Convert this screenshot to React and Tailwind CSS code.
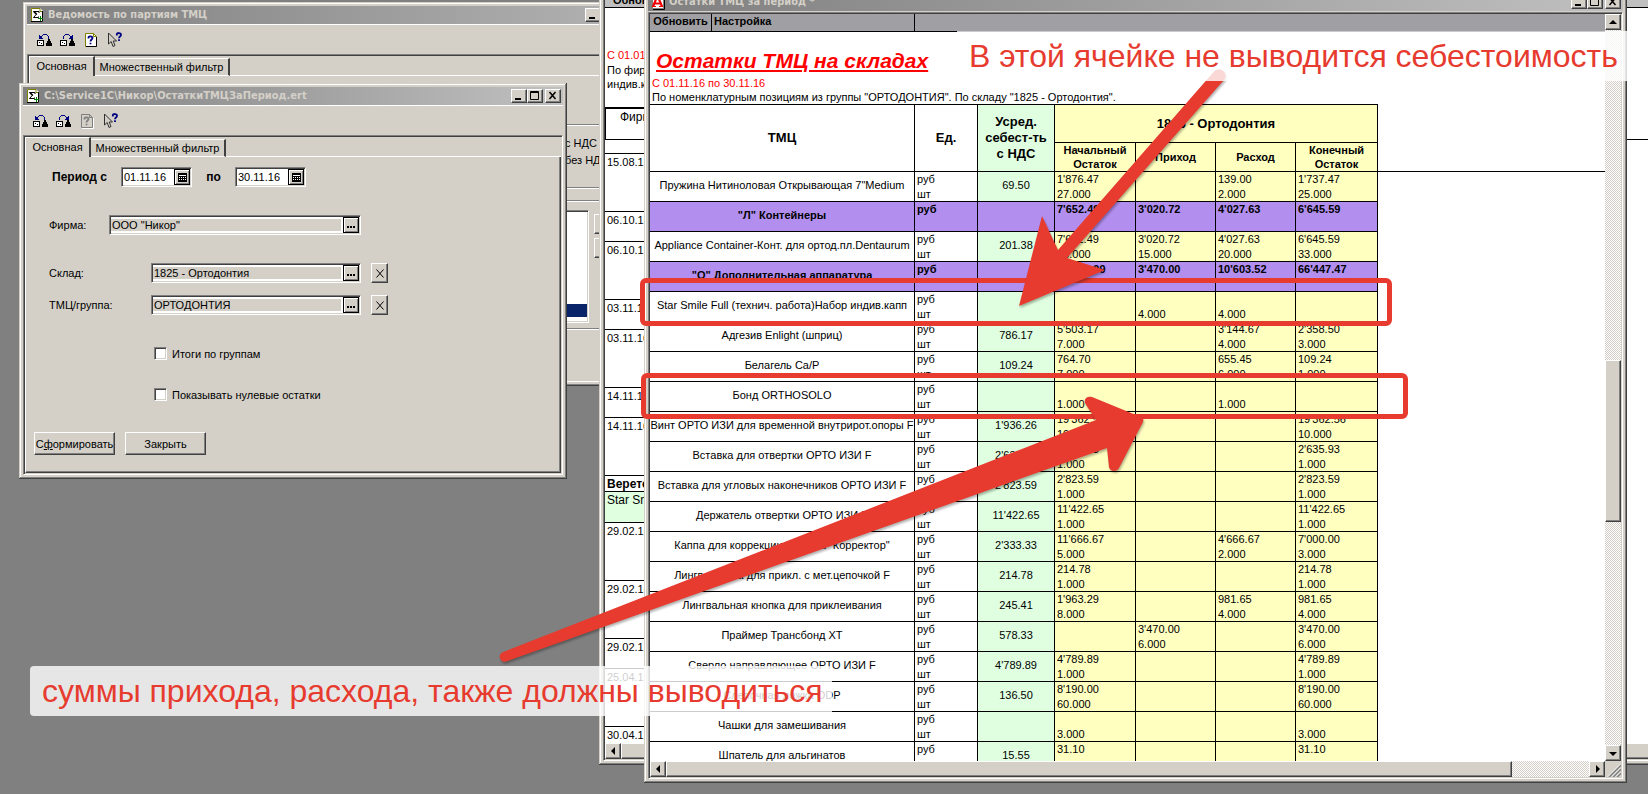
import React from "react";

const RAISED =
  "bg-[#d4d0c8] border border-t-white border-l-white border-b-[#404040] border-r-[#404040] shadow-[inset_-1px_-1px_0_#808080]";
const SUNKEN =
  "p-px border border-t-[#808080] border-l-[#808080] border-b-white border-r-white shadow-[inset_1px_1px_0_#404040,inset_-1px_-1px_0_#d4d0c8]";
const FRAME =
  "absolute flex flex-col bg-[#d4d0c8] p-1 shadow-[inset_-1px_-1px_0_#404040,inset_1px_1px_0_#d4d0c8,inset_-2px_-2px_0_#808080,inset_2px_2px_0_#ffffff]";
const TRACK =
  "bg-[repeating-conic-gradient(#d4d0c8_0_25%,#ffffff_0_50%)] bg-[length:2px_2px]";

function SigmaIcon() {
  return (
    <svg width="13" height="15" viewBox="0 0 13 15" className="shrink-0">
      <path d="M0 0h9l3 3v11H0z" fill="#fff" />
      <path d="M0.5 14V0.500H9v3h3" stroke="#808000" fill="none" />
      <path d="M11.500 3V13.500H0" stroke="#000" fill="none" />
      <path d="M8 5V3.500H2.500L5.200 6.500L2.500 9.500H7.500V8.500" stroke="#000" fill="none" />
      <path d="M3 3.500L5.800 6.500" stroke="#000" strokeWidth="1.500" />
      <path d="M9.500 8v5M7 10.500h5" stroke="#008000" />
    </svg>
  );
}

function ReportIcon() {
  return (
    <svg width="13" height="15" viewBox="0 0 13 15" className="shrink-0">
      <path d="M0.5 0.5h11v13h-11z" fill="#fff" stroke="#808080" />
      <path d="M12.500 1v13.500H1" fill="none" stroke="#000" />
      <path d="M1 11.500L4.500 3h2L10 11.500M3 8.500h5" stroke="#f00000" strokeWidth="2.200" fill="none" />
      <path d="M0 11.500h4M7 11.500h4" stroke="#f00000" />
    </svg>
  );
}

function ScalesIcon({ flip }) {
  return (
    <svg width="16" height="13" viewBox="0 0 16 13" shapeRendering="crispEdges">
      <g transform={flip ? "matrix(-1 0 0 1 15 0)" : undefined} fill="#000080">
        <path d="M6 0h4v1H6zM5 1h1v1H5zM10 1h1v1h-1zM4 2h1v1H4zM11 2h1v3h-1z" />
        <path d="M2 1h1v1h1v1h1v1h1v1H2z" />
      </g>
      <path d="M0 6h7v6H0z" />
      <path d="M1 7h5v4H1z" fill="#fff" />
      <path d="M2 8h1v1H2zM4 9h1v1H4z" />
      <path d="M11 5h2v2h1v2h1v3H9V9h1V7h1z" />
    </svg>
  );
}

function HelpDocIcon({ disabled }) {
  const edge = disabled ? "#808080" : "#808000";
  return (
    <svg width="13" height="15" viewBox="0 0 13 15">
      <path d="M0.500 0.500h8l3 3v10h-11z" fill={disabled ? "#d4d0c8" : "#fff"} stroke={edge} />
      <path d="M8.500 0.500v3h3" fill="none" stroke={edge} />
      <path d={disabled ? "M12.500 4v10.500H1" : "M11.500 4v9.500H1"} fill="none" stroke={disabled ? "#fff" : "#000"} />
      <path
        d="M3.500 5.500V4.500C3.500 3 7.500 3 7.500 5C7.500 6.500 5.500 6.500 5.500 8.500M5.500 9.700v1.600"
        fill="none"
        stroke={disabled ? "#808080" : "#000080"}
        strokeWidth="1.800"
      />
    </svg>
  );
}

function PointerHelpIcon() {
  return (
    <svg width="16" height="16" viewBox="0 0 16 16">
      <path d="M1.500 1v11l2.700-2.500L6 14.500l2-1L6.200 9H9.500z" fill="#d4d0c8" stroke="#303030" />
      <path
        d="M9.800 3.500V2.500C9.800 0.500 14 0.500 14 2.700C14 4.600 12 4.300 12 6.300M12 7.300v1.700"
        fill="none"
        stroke="#000080"
        strokeWidth="1.800"
      />
    </svg>
  );
}

function TitleBar({ icon, title, controls }) {
  return (
    <header className="flex h-[18px] shrink-0 items-center bg-linear-to-r from-[#808080] to-[#c0c0c0] pl-1 pr-0.5">
      {icon}
      <h2 className="ml-1 flex-1 truncate font-['DejaVu_Sans_Condensed','DejaVu_Sans',sans-serif] text-[11px] font-bold leading-[18px] text-[#d4d0c8]">
        {title}
      </h2>
      <div className={controls === "far" ? "mr-[162px] flex" : "flex"}>
        <button aria-label="Свернуть" className={`h-3.5 w-4 ${RAISED}`}>
          <svg width="14" height="12" viewBox="0 0 14 12">
            <path d="M3 8h6v2H3z" />
          </svg>
        </button>
        <button aria-label="Развернуть" className={`h-3.5 w-4 ${RAISED}`}>
          <svg width="14" height="12" viewBox="0 0 14 12">
            <path d="M2.500 1.500h8v8h-8zM2 2.500h9" fill="none" stroke="#000" />
          </svg>
        </button>
        <button aria-label="Закрыть окно" className={`ml-0.5 h-3.5 w-4 ${RAISED}`}>
          <svg width="14" height="12" viewBox="0 0 14 12">
            <path d="M3.500 2l6 7M9.500 2l-6 7" fill="none" stroke="#000" strokeWidth="1.500" />
          </svg>
        </button>
      </div>
    </header>
  );
}

function Toolbar({ helpDisabled }) {
  return (
    <div className="flex h-[29px] shrink-0 items-center gap-[7px] border-t border-white pl-2.5 pt-0.5">
      <button aria-label="Восстановить настройку"><ScalesIcon /></button>
      <button aria-label="Сохранить настройку"><ScalesIcon flip /></button>
      <button aria-label="Описание" className="ml-0.5"><HelpDocIcon disabled={helpDisabled} /></button>
      <button aria-label="Справка" className="ml-0.5"><PointerHelpIcon /></button>
    </div>
  );
}

function TabBar() {
  return (
    <div role="tablist" className="flex h-5 shrink-0 items-end leading-4">
      <button
        role="tab"
        aria-selected="true"
        className="h-5 w-[66px] border-l border-t border-r-2 border-l-white border-t-white border-r-[#404040] pb-0.5"
      >
        Основная
      </button>
      <button
        role="tab"
        aria-selected="false"
        className="h-[18px] w-[135px] whitespace-nowrap border-b border-t border-r-2 border-b-white border-t-white border-r-[#404040]"
      >
        Множественный фильтр
      </button>
      <div className="flex-1 self-stretch border-b border-white" />
    </div>
  );
}

function DateField({ id, value, label }) {
  return (
    <div className={`flex h-5 w-[71px] bg-white ${SUNKEN}`}>
      <input id={id} aria-label={label} defaultValue={value} className="w-[51px] bg-white pl-px font-normal outline-none" />
      <button aria-label="Календарь" className="flex w-4 items-center justify-center border border-black bg-[#d4d0c8] shadow-[inset_1px_1px_0_#ffffff,inset_-1px_-1px_0_#808080]">
        <svg width="9" height="9" viewBox="0 0 9 9">
          <path d="M0 0h9v9H0z" fill="#000" />
          <path d="M1 2h7v1H1zM1 4h1v1H1zM3 4h1v1H3zM5 4h1v1H5zM7 4h1v1H7zM1 6h1v1H1zM3 6h1v1H3zM5 6h1v1H5zM7 6h1v1H7z" fill="#fff" />
        </svg>
      </button>
    </div>
  );
}

function PickField({ id, value, wide }) {
  return (
    <div className={`flex h-5 ${wide ? "w-[252px]" : "w-[210px]"} ${SUNKEN}`}>
      <input id={id} defaultValue={value} className="min-w-0 flex-1 border-2 border-l-0 border-white bg-[#d4d0c8] pl-px outline-none" />
      <button aria-label="Выбрать" className="flex w-4 items-end justify-center border border-black bg-[#d4d0c8] pb-1 shadow-[inset_1px_1px_0_#ffffff,inset_-1px_-1px_0_#808080]">
        <svg width="8" height="2" viewBox="0 0 8 2">
          <path d="M0 0h2v2H0zM3 0h2v2H3zM6 0h2v2H6z" />
        </svg>
      </button>
    </div>
  );
}

function ClearButton({ label }) {
  return (
    <button aria-label={label} className={`ml-2.5 flex h-5 w-[17px] items-center justify-center ${RAISED}`}>
      <svg width="8" height="9" viewBox="0 0 8 9">
        <path d="M0.500 0.500l7 8M7.500 0.500l-7 8" stroke="#000" fill="none" />
      </svg>
    </button>
  );
}

function Check({ id, label, className }) {
  return (
    <div className={`ml-32 flex h-[13px] items-center ${className}`}>
      <input id={id} type="checkbox" className={`size-[13px] appearance-none bg-white ${SUNKEN}`} />
      <label htmlFor={id} className="ml-[5px] leading-4">{label}</label>
    </div>
  );
}

function BatchWindow() {
  return (
    <section className={`${FRAME} left-[23px] top-[2px] h-[384px] w-[780px]`}>
      <TitleBar icon={<SigmaIcon />} title="Ведомость по партиям ТМЦ" controls="far" />
      <Toolbar />
      <div className={`mt-px flex flex-1 flex-col ${SUNKEN}`}>
        <TabBar />
        <div className="flex flex-1 flex-col border-l border-white pl-[510px] pt-12">
          <fieldset className="h-16 border border-[#808080] pl-6 pt-2.5 leading-[17px] shadow-[inset_0_1px_0_#ffffff,0_1px_0_#ffffff]">
            <p>с НДС</p>
            <p>без НДС</p>
          </fieldset>
          <fieldset className="mt-3 flex h-[129px] items-start border border-[#808080] pt-[9px] shadow-[inset_0_1px_0_#ffffff,0_1px_0_#ffffff]">
            <div className={`flex h-[113px] w-12 flex-col justify-end bg-white ${SUNKEN}`}>
              <div className="mb-1 h-[13px] bg-[#0a246a]" />
            </div>
            <div className="ml-[5px] mt-1 flex flex-col gap-1">
              <button aria-label="Вверх" className={`h-5 w-10 ${RAISED}`} />
              <button aria-label="Вниз" className={`h-5 w-10 ${RAISED}`} />
            </div>
          </fieldset>
        </div>
      </div>
    </section>
  );
}

function SettingsWindow() {
  return (
    <section className={`${FRAME} left-[19px] top-[83px] h-[396px] w-[548px]`}>
      <TitleBar icon={<SigmaIcon />} title="C:\Service1C\Никор\ОстаткиТМЦЗаПериод.ert" />
      <Toolbar helpDisabled />
      <div className={`mt-px flex flex-1 flex-col ${SUNKEN}`}>
        <TabBar />
        <form
          onSubmit={(e) => e.preventDefault()}
          className="flex flex-1 flex-col border-b border-l border-r border-b-[#404040] border-l-white border-r-[#404040] pt-2.5 shadow-[inset_-1px_-1px_0_#808080]"
        >
          <div className="flex h-5 items-center pl-[26px] font-bold">
            <label htmlFor="from" className="w-[69px] text-[12px]">Период с</label>
            <DateField id="from" value="01.11.16" label="Начало периода" />
            <label htmlFor="to" className="w-[43px] text-center text-[12px]">по</label>
            <DateField id="to" value="30.11.16" label="Конец периода" />
          </div>
          <div className="mt-7 flex h-5 items-center pl-[23px]">
            <label htmlFor="firm" className="w-[60px]">Фирма:</label>
            <PickField id="firm" value={'ООО "Никор"'} wide />
          </div>
          <div className="mt-7 flex h-5 items-center pl-[23px]">
            <label htmlFor="store" className="w-[102px]">Склад:</label>
            <PickField id="store" value="1825 - Ортодонтия" />
            <ClearButton label="Очистить склад" />
          </div>
          <div className="mt-3 flex h-5 items-center pl-[23px]">
            <label htmlFor="group" className="w-[102px]">ТМЦ/группа:</label>
            <PickField id="group" value="ОРТОДОНТИЯ" />
            <ClearButton label="Очистить группу" />
          </div>
          <Check id="totals" label="Итоги по группам" className="mt-8" />
          <Check id="zeros" label="Показывать нулевые остатки" className="mt-7" />
          <div className="mt-[31px] flex gap-2.5 pl-2">
            <button className={`h-[23px] w-[81px] whitespace-nowrap ${RAISED}`}>
              С<u>ф</u>ормировать
            </button>
            <button className={`h-[23px] w-[81px] ${RAISED}`}>Закрыть</button>
          </div>
        </form>
      </div>
    </section>
  );
}

const ARROWS = {
  left: "M9 3v8L5 7z",
  right: "M6 3v8l4-4z",
  up: "M3 9h8L7 5z",
  down: "M3 6h8l-4 4z",
};

function ScrollButton({ dir, label }) {
  return (
    <button aria-label={label} className={`size-4 shrink-0 ${RAISED}`}>
      <svg width="14" height="14" viewBox="0 0 14 14">
        <path d={ARROWS[dir]} />
      </svg>
    </button>
  );
}

const LEDGER = [
  { h: "h-[58px]", text: "15.08.16" },
  { h: "h-[30px]", text: "06.10.16" },
  { h: "h-[58px]", text: "06.10.16" },
  { h: "h-[30px]", text: "03.11.16" },
  { h: "h-[58px]", text: "03.11.16" },
  { h: "h-[30px]", text: "14.11.16" },
  { h: "h-[58px]", text: "14.11.16" },
  { h: "h-4", text: "Веретенникова", style: "font-bold text-[12px]" },
  { h: "h-[31px]", text: "Star Smile Full", style: "bg-[#e0ffe0] text-[12px]" },
  { h: "h-[58px]", text: "29.02.16" },
  { h: "h-[58px]", text: "29.02.16" },
  { h: "h-[30px]", text: "29.02.16" },
  { h: "h-[58px]", text: "25.04.16" },
  { h: "h-[30px]", text: "30.04.16" },
];

function LedgerWindow() {
  return (
    <section className={`${FRAME} left-[599px] top-[-35px] h-[800px] w-[1100px]`}>
      <TitleBar icon={<ReportIcon />} title="Ведомость по партиям ТМЦ" />
      <div className={`mt-px flex min-h-0 flex-1 flex-col bg-white ${SUNKEN}`}>
        <div className="h-[18px] shrink-0 border-b border-black bg-[#c0c0c0] pl-2 text-[11px] font-bold leading-5">
          Обновить
        </div>
        <div className="min-h-0 flex-1 overflow-hidden text-[11px]">
          <div className="h-[99px] pl-0.5 pt-10 leading-[14px]">
            <p className="text-[#ff0000]">С 01.01.16 по 30.11.16</p>
            <p className="mt-px">По фирме "Никор". По ТМЦ "Star Smile</p>
            <p>индив.капп"</p>
          </div>
          <div className="h-[33px] border-b border-black">
            <div className="h-[33px] w-[300px] border-b border-l border-t-2 border-black pl-3.5 text-[12px] leading-4">
              Фирма
            </div>
          </div>
          <div className="h-[14px] w-[900px] border-b border-black" />
          {LEDGER.map((row, i) => (
            <div key={i} className={`w-[900px] border-b border-black pl-0.5 leading-4 ${row.h} ${row.style || ""}`}>
              {row.text}
            </div>
          ))}
        </div>
        <div className="flex h-4 shrink-0">
          <ScrollButton dir="left" label="Прокрутить влево" />
          <div className={`w-[1050px] ${RAISED}`} />
        </div>
      </div>
    </section>
  );
}

const ROWS = [
  { name: 'Пружина Нитиноловая Открывающая 7"Medium', cost: "69.50", v: [["1'876.47", "27.000"], ["", ""], ["139.00", "2.000"], ["1'737.47", "25.000"]] },
  { name: '"Л" Контейнеры', group: true, v: [["7'652.49"], ["3'020.72"], ["4'027.63"], ["6'645.59"]] },
  { name: "Appliance Container-Конт. для ортод.пл.Dentaurum", cost: "201.38", v: [["7'652.49", "38.000"], ["3'020.72", "15.000"], ["4'027.63", "20.000"], ["6'645.59", "33.000"]] },
  { name: '"О" Дополнительная аппаратура', group: true, v: [["73'580.99"], ["3'470.00"], ["10'603.52"], ["66'447.47"]] },
  { name: "Star Smile Full (технич. работа)Набор индив.капп", v: [["", ""], ["", "4.000"], ["", "4.000"], ["", ""]] },
  { name: "Адгезив Enlight (шприц)", cost: "786.17", v: [["5'503.17", "7.000"], ["", ""], ["3'144.67", "4.000"], ["2'358.50", "3.000"]] },
  { name: "Белагель Ca/P", cost: "109.24", v: [["764.70", "7.000"], ["", ""], ["655.45", "6.000"], ["109.24", "1.000"]] },
  { name: "Бонд ORTHOSOLO", v: [["", "1.000"], ["", ""], ["", "1.000"], ["", ""]] },
  { name: "Винт ОРТО ИЗИ для временной внутрирот.опоры F", cost: "1'936.26", v: [["19'362.56", "10.000"], ["", ""], ["", ""], ["19'362.56", "10.000"]] },
  { name: "Вставка для отвертки ОРТО ИЗИ F", cost: "2'635.93", v: [["2'635.93", "1.000"], ["", ""], ["", ""], ["2'635.93", "1.000"]] },
  { name: "Вставка для угловых наконечников ОРТО ИЗИ F", cost: "2'823.59", v: [["2'823.59", "1.000"], ["", ""], ["", ""], ["2'823.59", "1.000"]] },
  { name: "Держатель отвертки ОРТО ИЗИ F", cost: "11'422.65", v: [["11'422.65", "1.000"], ["", ""], ["", ""], ["11'422.65", "1.000"]] },
  { name: 'Каппа для коррекции прикуса "Корректор"', cost: "2'333.33", v: [["11'666.67", "5.000"], ["", ""], ["4'666.67", "2.000"], ["7'000.00", "3.000"]] },
  { name: "Лингв. кнопка для прикл. с мет.цепочкой F", cost: "214.78", v: [["214.78", "1.000"], ["", ""], ["", ""], ["214.78", "1.000"]] },
  { name: "Лингвальная кнопка для приклеивания", cost: "245.41", v: [["1'963.29", "8.000"], ["", ""], ["981.65", "4.000"], ["981.65", "4.000"]] },
  { name: "Праймер Трансбонд XT", cost: "578.33", v: [["", ""], ["3'470.00", "6.000"], ["", ""], ["3'470.00", "6.000"]] },
  { name: "Сверло направляющее ОРТО ИЗИ F", cost: "4'789.89", v: [["4'789.89", "1.000"], ["", ""], ["", ""], ["4'789.89", "1.000"]] },
  { name: "Слепочная ложка ODP", cost: "136.50", v: [["8'190.00", "60.000"], ["", ""], ["", ""], ["8'190.00", "60.000"]] },
  { name: "Чашки для замешивания", v: [["", "3.000"], ["", ""], ["", ""], ["", "3.000"]] },
  { name: "Шпатель для альгинатов", cost: "15.55", v: [["31.10", ""], ["", ""], ["", ""], ["31.10", ""]] },
];

const CELL = "border-b border-r border-black p-0";

function TwoLines({ lines }) {
  return (
    <div className="h-[29px] overflow-hidden pl-0.5 leading-[15px]">
      <div className="h-[15px]">{lines[0]}</div>
      <div className="h-[15px]">{lines[1]}</div>
    </div>
  );
}

function StockTable() {
  return (
    <table className="w-full table-fixed border-separate border-spacing-0 text-[11px]">
      <colgroup>
        <col className="w-[265px]" />
        <col className="w-[63px]" />
        <col className="w-[77px]" />
        <col className="w-[81px]" />
        <col className="w-[80px]" />
        <col className="w-[80px]" />
        <col className="w-[82px]" />
        <col />
      </colgroup>
      <thead className="leading-4">
        <tr className="h-[39px] text-[13px]">
          <th rowSpan={2} className={`${CELL} border-t`}>ТМЦ</th>
          <th rowSpan={2} className={`${CELL} border-t`}>Ед.</th>
          <th rowSpan={2} className={`${CELL} border-t bg-[#e0ffe0]`}>
            Усред.<br />себест-ть<br />с НДС
          </th>
          <th colSpan={4} className={`${CELL} border-t bg-[#ffffc0]`}>1825 - Ортодонтия</th>
          <td rowSpan={2} className="border-b border-black p-0" />
        </tr>
        <tr className="h-[29px] leading-[14px]">
          <th className={`${CELL} bg-[#ffffc0]`}>Начальный Остаток</th>
          <th className={`${CELL} bg-[#ffffc0]`}>Приход</th>
          <th className={`${CELL} bg-[#ffffc0]`}>Расход</th>
          <th className={`${CELL} bg-[#ffffc0]`}>Конечный Остаток</th>
        </tr>
      </thead>
      <tbody>
        {ROWS.map((row) => (
          <tr key={row.name} className={row.group ? "bg-[#b28fef] font-bold" : ""}>
            <td className={CELL}>
              <div className="flex justify-center overflow-hidden whitespace-nowrap pb-0.5 leading-[15px]">{row.name}</div>
            </td>
            <td className={CELL}>
              <TwoLines lines={row.group ? ["руб", ""] : ["руб", "шт"]} />
            </td>
            <td className={`${CELL} text-center ${row.group ? "" : "bg-[#e0ffe0]"}`}>
              <div className="pb-0.5 leading-[15px]">{row.cost}</div>
            </td>
            {row.v.map((lines, i) => (
              <td key={i} className={`${CELL} ${row.group ? "" : "bg-[#ffffc0]"}`}>
                <TwoLines lines={lines} />
              </td>
            ))}
            <td className="bg-white p-0" />
          </tr>
        ))}
      </tbody>
    </table>
  );
}

function StockWindow() {
  return (
    <section className={`${FRAME} left-[644px] top-[-11px] h-[794px] w-[983px]`}>
      <TitleBar icon={<ReportIcon />} title="Остатки ТМЦ за период  *" />
      <div className={`mt-px flex min-h-0 flex-1 flex-col bg-white ${SUNKEN}`}>
        <div className="flex min-h-0 flex-1">
          <div className="flex min-w-0 flex-1 flex-col overflow-hidden">
            <div className="flex h-[18px] shrink-0 border-b border-black bg-[#a0a0a4] text-[11px] font-bold leading-[15px]">
              <button className="flex w-[62px] justify-center border-r border-black">Обновить</button>
              <button className="flex w-[203px] border-r border-black pl-0.5">Настройка</button>
            </div>
            <div className="h-[72px] shrink-0 pl-0.5 pt-[17px] text-[11px] leading-[14px]">
              <h1 className="ml-1 text-[21px] font-bold italic leading-6 text-[#ff0000] underline decoration-2 underline-offset-2">
                Остатки ТМЦ на складах
              </h1>
              <p className="mt-[3px] text-[#ff0000]">С 01.11.16 по 30.11.16</p>
              <p>По номенклатурным позициям из группы "ОРТОДОНТИЯ". По складу "1825 - Ортодонтия".</p>
            </div>
            <StockTable />
          </div>
          <div className={`flex w-4 shrink-0 flex-col ${TRACK}`}>
            <ScrollButton dir="up" label="Прокрутить вверх" />
            <div className={`mt-[330px] h-[162px] ${RAISED}`} />
            <div className="flex-1" />
            <ScrollButton dir="down" label="Прокрутить вниз" />
          </div>
        </div>
        <div className="flex h-4 shrink-0">
          <div className={`flex flex-1 ${TRACK}`}>
            <ScrollButton dir="left" label="Прокрутить влево" />
            <div className={`w-[846px] ${RAISED}`} />
            <div className="flex-1" />
            <ScrollButton dir="right" label="Прокрутить вправо" />
          </div>
          <svg width="16" height="16" viewBox="0 0 16 16" className="bg-[#d4d0c8]">
            <path d="M4 16L16 4M8 16l8-8M12 16l4-4" stroke="#808080" strokeWidth="1.800" />
            <path d="M3 15.500L15.500 3M7 15.500L15.500 7M11 15.500l4.500-4.500" stroke="#fff" />
          </svg>
        </div>
      </div>
    </section>
  );
}

function Annotations() {
  return (
    <>
      <div className="absolute left-[640px] top-[278px] h-12 w-[752px] rounded-md border-[5px] border-[#e63b2e]" />
      <div className="absolute left-[641px] top-[373px] h-[46px] w-[767px] rounded-md border-[5px] border-[#e63b2e]" />
      <svg className="pointer-events-none absolute inset-0 size-full" aria-hidden="true">
        <g fill="#e63b2e" className="drop-shadow-[1px_2px_1px_rgba(0,0,0,0.3)]">
          <path d="M1214 71.500A6.500 6.500 0 0 1 1224 80L1067 258L1105 270L1019 306L1042 216L1058 250Z" />
          <path d="M502 652.500L1096 420L1085.500 404C1083 399 1087 395.500 1092 397L1142 417.500Q1144 419 1143 422L1119 468C1117 472 1110 472 1109 467L1107 448L506 661.500A5 5 0 0 1 502 652.500Z" />
        </g>
      </svg>
      <p className="absolute left-[957px] top-[31px] h-[50px] w-[670px] whitespace-nowrap bg-white/80 pl-3 text-[32px] leading-[50px] text-[#e63b2e]">
        В этой ячейке не выводится себестоимость
      </p>
      <p className="absolute left-[30px] top-[666px] h-[50px] w-[802px] whitespace-nowrap rounded-sm bg-white/80 pl-3 text-[32px] leading-[50px] text-[#e63b2e]">
        суммы прихода, расхода, также должны выводиться
      </p>
    </>
  );
}

export default function App() {
  return (
    <main className="relative h-screen w-full overflow-hidden bg-[#808080] font-['Liberation_Sans',Arial,sans-serif] text-[11px] leading-4 text-black">
      <BatchWindow />
      <SettingsWindow />
      <LedgerWindow />
      <StockWindow />
      <Annotations />
    </main>
  );
}
